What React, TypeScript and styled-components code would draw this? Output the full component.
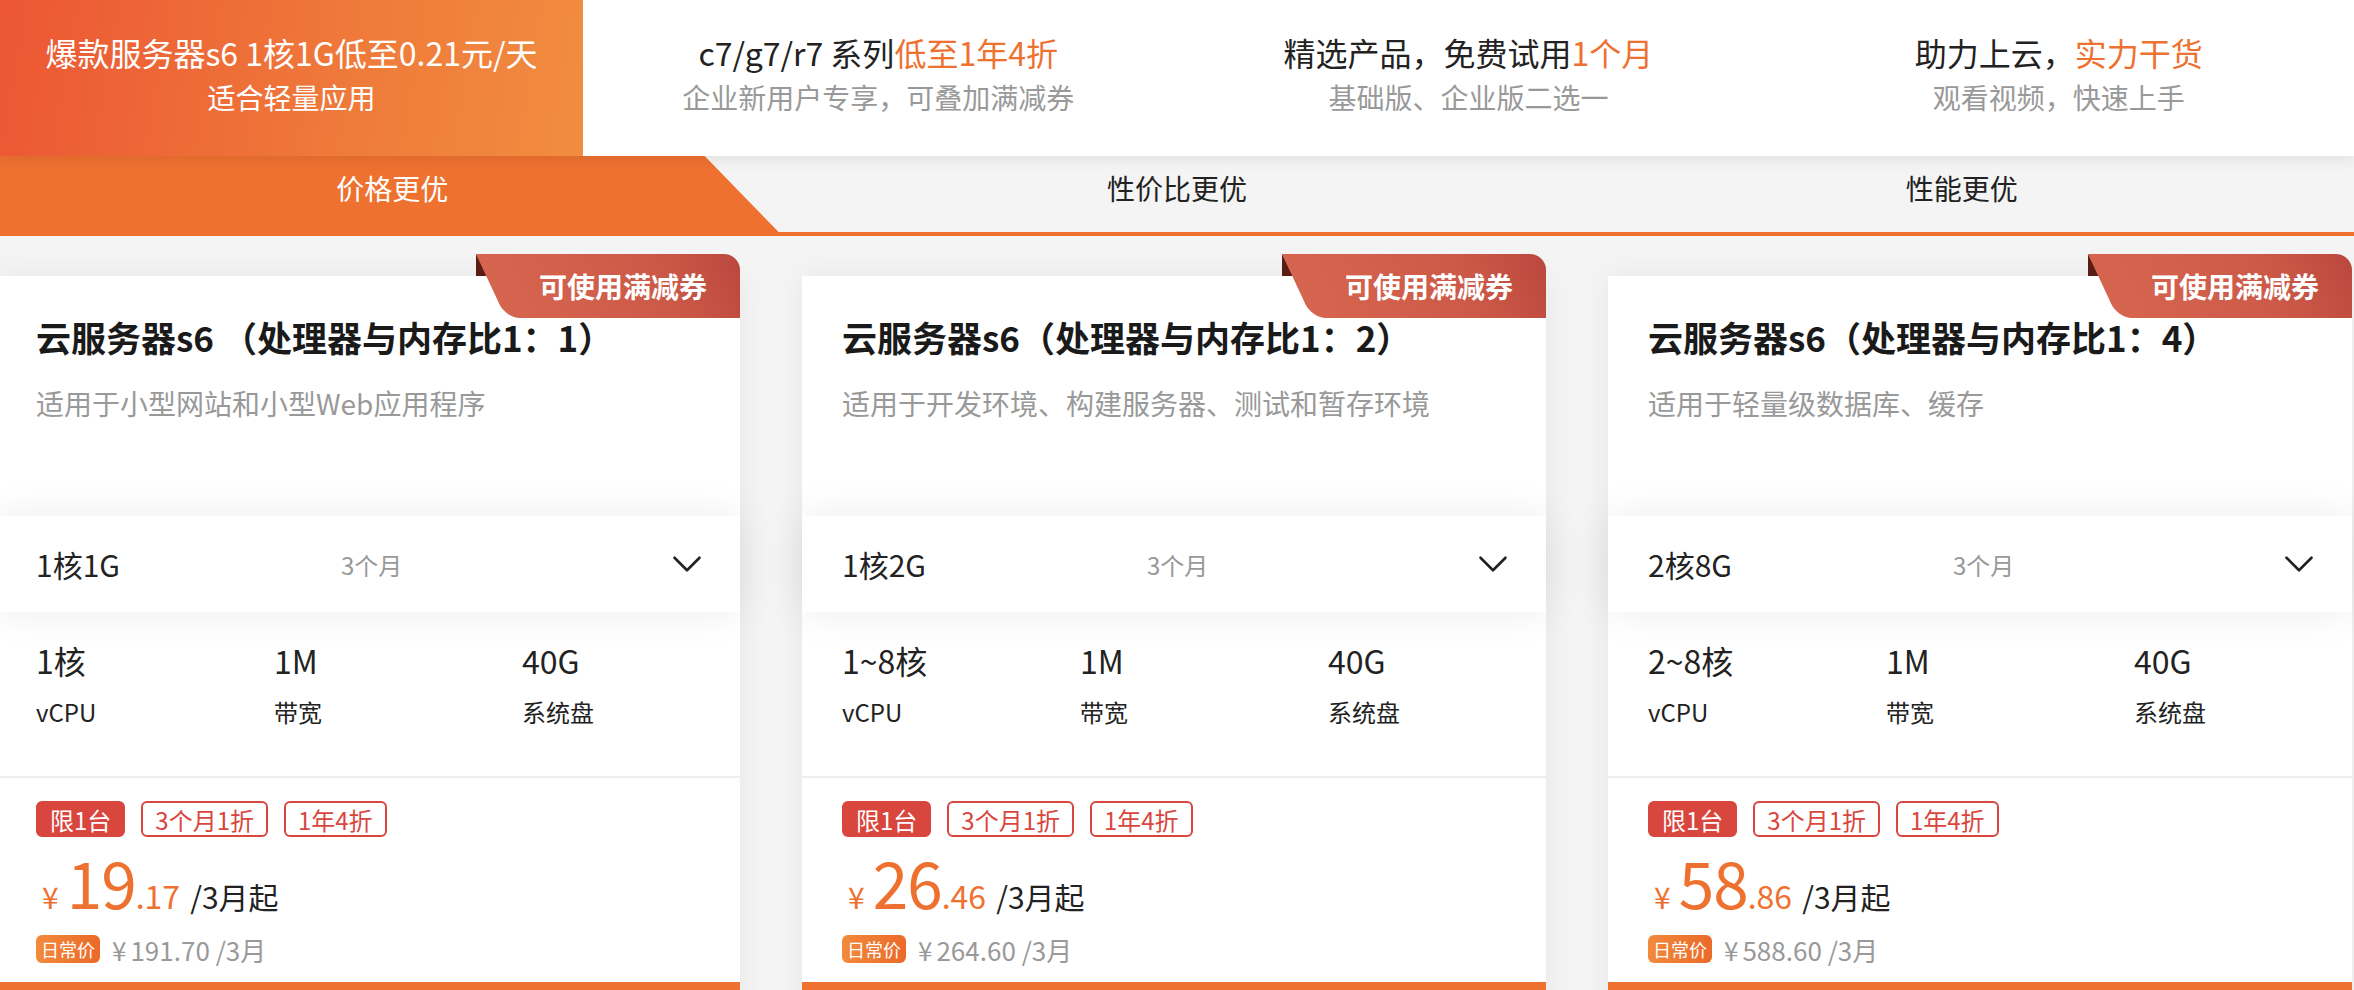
import React from 'react';
import styled, { createGlobalStyle, css } from 'styled-components';
import { ChevronDown } from 'lucide-react';

const GlobalStyle = createGlobalStyle`
  html, body {
    margin: 0;
    padding: 0;
    overflow: hidden;
  }
  body {
    font-family: "Noto Sans CJK SC", "Noto Sans", sans-serif;
    background: #f4f4f4;
    color: #222;
  }
  * {
    box-sizing: border-box;
  }
`;

const promos = [
  { title: '爆款服务器s6 1核1G低至0.21元/天', highlight: '', sub: '适合轻量应用', hot: true },
  { title: 'c7/g7/r7 系列', highlight: '低至1年4折', sub: '企业新用户专享，可叠加满减券' },
  { title: '精选产品，免费试用', highlight: '1个月', sub: '基础版、企业版二选一' },
  { title: '助力上云，', highlight: '实力干货', sub: '观看视频，快速上手' },
];

const tabs = ['价格更优', '性价比更优', '性能更优'];

const products = [
  {
    title: '云服务器s6 （处理器与内存比1：1）',
    desc: '适用于小型网站和小型Web应用程序',
    config: '1核1G',
    cpu: '1核',
    price: '19',
    cents: '.17',
    regular: '191.70',
  },
  {
    title: '云服务器s6（处理器与内存比1：2）',
    desc: '适用于开发环境、构建服务器、测试和暂存环境',
    config: '1核2G',
    cpu: '1~8核',
    price: '26',
    cents: '.46',
    regular: '264.60',
  },
  {
    title: '云服务器s6（处理器与内存比1：4）',
    desc: '适用于轻量级数据库、缓存',
    config: '2核8G',
    cpu: '2~8核',
    price: '58',
    cents: '.86',
    regular: '588.60',
  },
];

const App = () => {
  return (
    <Page>
      <GlobalStyle />
      <PromoBar>
        {promos.map((p) => (
          <Promo key={p.sub} $hot={p.hot}>
            <PromoTitle>
              {p.title}
              {p.highlight && <Highlight>{p.highlight}</Highlight>}
            </PromoTitle>
            <PromoSub $hot={p.hot}>{p.sub}</PromoSub>
          </Promo>
        ))}
      </PromoBar>
      <TabBar>
        {tabs.map((t, i) => (
          <Tab key={t} $active={i === 0}>
            <TabLabel>{t}</TabLabel>
          </Tab>
        ))}
      </TabBar>
      <CardRow>
        {products.map((p) => (
          <Card key={p.config}>
            <Badge>
              <BadgeFold />
              <BadgeBody />
              <BadgeText>可使用满减券</BadgeText>
            </Badge>
            <CardHead>
              <CardTitle>{p.title}</CardTitle>
              <CardDesc>{p.desc}</CardDesc>
            </CardHead>
            <SelectRow>
              <SelectValue>{p.config}</SelectValue>
              <SelectTerm>3个月</SelectTerm>
              <ChevronDown size={50} strokeWidth={1.25} color="#222" />
            </SelectRow>
            <Specs>
              <Spec>
                <SpecValue>{p.cpu}</SpecValue>
                <SpecLabel>vCPU</SpecLabel>
              </Spec>
              <Spec>
                <SpecValue>1M</SpecValue>
                <SpecLabel>带宽</SpecLabel>
              </Spec>
              <Spec>
                <SpecValue>40G</SpecValue>
                <SpecLabel>系统盘</SpecLabel>
              </Spec>
            </Specs>
            <PriceBlock>
              <Tags>
                <Tag $filled>限1台</Tag>
                <Tag>3个月1折</Tag>
                <Tag>1年4折</Tag>
              </Tags>
              <PriceRow>
                <Yen>¥</Yen>
                <PriceInt>{p.price}</PriceInt>
                <PriceCents>{p.cents}</PriceCents>
                <PriceUnit>/3月起</PriceUnit>
              </PriceRow>
              <RegularRow>
                <RegularTag>日常价</RegularTag>
                <RegularPrice>
                  <RegularYen>¥</RegularYen>
                  {p.regular} /3月
                </RegularPrice>
              </RegularRow>
            </PriceBlock>
            <BuyBar />
          </Card>
        ))}
      </CardRow>
    </Page>
  );
};

const Page = styled.div`
  width: 2354px;
  height: 990px;
  overflow: hidden;
  background: #f4f4f4;
`;

const PromoBar = styled.div`
  position: relative;
  z-index: 2;
  display: grid;
  grid-template-columns: 583px repeat(3, 1fr);
  height: 156px;
  background: #fff;
  box-shadow: 0 4px 14px rgba(0, 0, 0, 0.08);
`;

const Promo = styled.div<{ $hot?: boolean }>`
  display: flex;
  flex-direction: column;
  align-items: center;
  padding-top: 30px;
  color: #222;
  ${({ $hot }) =>
    $hot &&
    css`
      color: #fff;
      background: linear-gradient(100deg, #ec5634 0%, #ef7a3a 60%, #f18d40 100%);
    `}
`;

const PromoTitle = styled.div`
  font-size: 32px;
  line-height: 44px;
  white-space: nowrap;
`;

const Highlight = styled.span`
  color: #ee7130;
`;

const PromoSub = styled.div<{ $hot?: boolean }>`
  margin-top: 3px;
  font-size: 28px;
  line-height: 40px;
  color: ${({ $hot }) => ($hot ? '#fff' : '#999')};
`;

const TabBar = styled.div`
  position: relative;
  z-index: 1;
  display: grid;
  grid-template-columns: repeat(3, 1fr);
  height: 80px;
  background: #f4f4f4;
  border-bottom: 4px solid #ee7130;
`;

const Tab = styled.div<{ $active?: boolean }>`
  position: relative;
  display: flex;
  align-items: center;
  justify-content: center;
  padding-bottom: 12px;
  font-size: 28px;
  color: ${({ $active }) => ($active ? '#fff' : '#222')};
  ${({ $active }) =>
    $active &&
    css`
      &::before {
        content: '';
        position: absolute;
        inset: 0;
        background: #ee7130;
        clip-path: polygon(0 0, calc(100% - 80px) 0, calc(100% - 6px) 100%, 0 100%);
      }
    `}
`;

const TabLabel = styled.span`
  position: relative;
`;

const CardRow = styled.div`
  display: flex;
  gap: 62px;
  margin: 40px 0 0 -4px;
`;

const Card = styled.div`
  position: relative;
  flex: 0 0 744px;
  background: #fff;
  box-shadow: 0 0 30px rgba(0, 0, 0, 0.06);
`;

const Badge = styled.div`
  position: absolute;
  top: -22px;
  right: 0;
  width: 264px;
  height: 64px;
`;

const BadgeFold = styled.div`
  position: absolute;
  left: 0;
  top: 0;
  width: 12px;
  height: 22px;
  background: #5a1d15;
  clip-path: polygon(0 0, 100% 100%, 0 100%);
`;

const BadgeBody = styled.div`
  position: absolute;
  inset: 0;
  overflow: hidden;
  border-top-right-radius: 16px;

  &::before {
    content: '';
    position: absolute;
    top: 0;
    left: 0;
    width: 300px;
    height: 100%;
    background: linear-gradient(90deg, #d6654f 0%, #cd5a48 55%, #b4413a 100%);
    border-bottom-left-radius: 14px;
    transform-origin: top left;
    transform: skewX(25deg);
  }
`;

const BadgeText = styled.span`
  position: relative;
  display: flex;
  align-items: center;
  justify-content: center;
  height: 100%;
  padding-left: 30px;
  font-size: 28px;
  font-weight: 700;
  color: #fff;
`;

const CardHead = styled.div`
  height: 240px;
  padding: 37px 40px 0;
`;

const CardTitle = styled.div`
  font-size: 35px;
  line-height: 48px;
  font-weight: 700;
  color: #1a1a1a;
  white-space: nowrap;
`;

const CardDesc = styled.div`
  margin-top: 22px;
  font-size: 28px;
  line-height: 40px;
  color: #999;
`;

const SelectRow = styled.div`
  position: relative;
  display: grid;
  grid-template-columns: 305px 1fr auto;
  align-items: center;
  height: 96px;
  padding: 0 28px 0 40px;
  background: #fff;
  box-shadow: 0 0 40px rgba(0, 0, 0, 0.08);
`;

const SelectValue = styled.span`
  font-size: 30px;
  color: #222;
`;

const SelectTerm = styled.span`
  font-size: 24px;
  color: #999;
`;

const Specs = styled.div`
  display: grid;
  grid-template-columns: 238px 248px 1fr;
  padding: 28px 40px 46px;
  border-bottom: 2px solid #eeeeee;
`;

const Spec = styled.div`
  display: flex;
  flex-direction: column;
  gap: 14px;
`;

const SpecValue = styled.span`
  font-size: 32px;
  line-height: 40px;
  color: #222;
`;

const SpecLabel = styled.span`
  font-size: 24px;
  line-height: 36px;
  color: #222;
`;

const PriceBlock = styled.div`
  padding: 23px 40px 0;
`;

const Tags = styled.div`
  display: flex;
  gap: 16px;
`;

const Tag = styled.span<{ $filled?: boolean }>`
  display: inline-flex;
  align-items: center;
  height: 36px;
  padding: 0 12px;
  font-size: 24px;
  border: 2px solid #d9463e;
  border-radius: 6px;
  color: ${({ $filled }) => ($filled ? '#fff' : '#d9463e')};
  background: ${({ $filled }) => ($filled ? '#d9463e' : '#fff')};
`;

const PriceRow = styled.div`
  display: flex;
  align-items: baseline;
  margin-top: 14px;
  height: 60px;
  line-height: 60px;
  color: #ee7130;
`;

const Yen = styled.span`
  font-size: 30px;
  margin: 0 8px 0 6px;
`;

const PriceInt = styled.span`
  font-size: 64px;
  letter-spacing: -1px;
`;

const PriceCents = styled.span`
  font-size: 32px;
`;

const PriceUnit = styled.span`
  margin-left: 10px;
  font-size: 30px;
  color: #222;
`;

const RegularRow = styled.div`
  display: flex;
  align-items: center;
  gap: 12px;
  margin-top: 20px;
  height: 36px;
`;

const RegularTag = styled.span`
  display: inline-flex;
  align-items: center;
  height: 28px;
  padding: 0 5px;
  font-size: 18px;
  color: #fff;
  border-radius: 6px;
  background: linear-gradient(90deg, #f28a3c, #ea6a2a);
`;

const RegularPrice = styled.span`
  font-size: 26px;
  color: #999;
`;

const RegularYen = styled.span`
  margin-right: 4px;
`;

const BuyBar = styled.div`
  height: 80px;
  margin-top: 15px;
  background: #ee7130;
`;

export default App;
